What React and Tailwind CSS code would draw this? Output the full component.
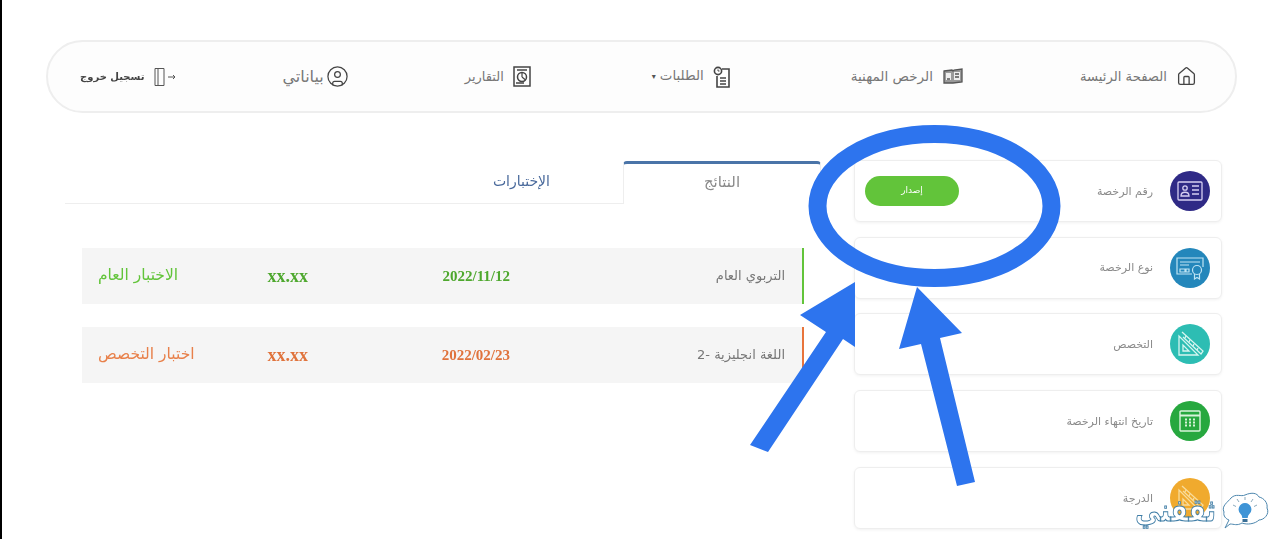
import React from 'react';
import { House, CircleUser } from 'lucide-react';

const ARABIC = "font-['DejaVu_Sans',sans-serif]";

// --- ICONS ---

const LicensesIcon = () => (
  <svg width="22" height="16" viewBox="0 0 22 16" fill="none" stroke="#555" strokeWidth="1.3">
    <path d="M2 3 L10 2 L11 3 L12 2 L20 1 V14 L11 15 L2 15 Z" fill="#9a9a9a" />
    <rect x="4" y="5" width="5" height="7" fill="#eee" stroke="none" />
    <rect x="12" y="4" width="6" height="8" fill="#eee" stroke="none" />
    <path d="M5 11h3M13 6h4M13 9h4" />
  </svg>
);

const RequestsIcon = () => (
  <svg width="18" height="22" viewBox="0 0 18 22" fill="none" stroke="#444" strokeWidth="1.6">
    <circle cx="5" cy="5" r="3.600" />
    <path d="M5 3.400V5h1.500" strokeWidth="1" />
    <path d="M9 3h7v18H4V10" />
    <path d="M7 12h6M7 15h6M7 18h6" strokeWidth="1.3" />
  </svg>
);

const ReportsIcon = () => (
  <svg width="18" height="21" viewBox="0 0 18 21" fill="none" stroke="#444" strokeWidth="1.5">
    <rect x="1" y="1" width="16" height="19" />
    <path d="M4 4h10" />
    <circle cx="9" cy="11" r="4.500" />
    <path d="M9 11V6.500M9 11l3.500 3" strokeWidth="1.2" />
    <path d="M3 17h8" />
  </svg>
);

const LogoutIcon = () => (
  <svg width="22" height="20" viewBox="0 0 22 20" fill="none" stroke="#555" strokeWidth="1">
    <path d="M1 1.500h9v17H1z" />
    <path d="M4 1.500v17" />
    <path d="M14 10h7M19 8l2 2-2 2" />
  </svg>
);

const IdCardIcon = () => (
  <svg width="26" height="20" viewBox="0 0 26 20" fill="none" stroke="#d6cff2" strokeWidth="1.3">
    <rect x="1" y="1" width="24" height="18" rx="1" />
    <circle cx="8" cy="7" r="2.200" />
    <path d="M4 15c0-5 8-5 8 0z" />
    <path d="M15 5h7M15 9h7M15 13h7" />
  </svg>
);

const CertificateIcon = () => (
  <svg width="28" height="24" viewBox="0 0 28 24" fill="none" stroke="#bfe4f4" strokeWidth="1.2">
    <path d="M16 18H1V2h26v9" />
    <path d="M4 6h20M4 9h9M4 13h5v3H4zM10 13h3v3h-3z" />
    <circle cx="21" cy="14" r="4.500" />
    <path d="M18.500 18v5l2.500-1.500 2.500 1.500v-5" />
  </svg>
);

const RulersIcon = ({ stroke = '#d6f5f0' }) => (
  <svg width="28" height="28" viewBox="0 0 28 28" fill="none" stroke={stroke} strokeWidth="1.3">
    <path d="M3 25V6l19 19z" />
    <path d="M7 21v-6l6 6z" />
    <path d="M6 2l21 19-2 3L7 7" />
    <path d="M10 6l-1 2M14 10l-1 2M18 14l-1 2M22 18l-1 2" />
  </svg>
);

const CalendarIcon = () => (
  <svg width="24" height="24" viewBox="0 0 24 24" fill="none" stroke="#d8f3da" strokeWidth="1.4">
    <rect x="2" y="2" width="20" height="20" rx="1" />
    <path d="M2 6.500h20" strokeWidth="2" />
    <path d="M7 10.500h2M11 10.500h2M15 10.500h2M7 13.500h2M11 13.500h2M15 13.500h2M7 16.500h2M11 16.500h2M15 16.500h2" strokeWidth="2" />
  </svg>
);

const BulbBubble = () => (
  <svg width="50" height="40" viewBox="0 0 50 40">
    <path
      d="M4 21C1 15 8 11 11 7c5-5 10-1 14-3 7-3 12-2 14 2 5 1 9 6 8 11 3 6-3 12-8 12-4 4-12 5-17 3-5 3-8 1-12 1L5 37l4-8C6 28 3 25 4 21z"
      fill="#fff"
      stroke="#4c86ad"
      strokeWidth="1"
    />
    <path d="M25 12a6.500 6.500 0 0 1 4 11.500c-1 1-1 2-1.300 3.500h-5.400c-.3-1.500-.3-2.500-1.300-3.500A6.500 6.500 0 0 1 25 12z" fill="#3f94d6" />
    <rect x="22.500" y="28" width="5" height="3" fill="#3a6f96" />
    <path d="M25 6v3M17 8l2 3M33 8l-2 3M13 14l3 1.500M37 14l-3 1.500" stroke="#6f94ab" strokeWidth="0.8" />
  </svg>
);

// --- DATA ---

const navItems = [
  { icon: <House size={21} strokeWidth={1.5} color="#444" />, label: 'الصفحة الرئيسة', size: 'text-[13.2px]' },
  { icon: <LicensesIcon />, label: 'الرخص المهنية', size: 'text-[13.6px]' },
  { icon: <RequestsIcon />, label: 'الطلبات', caret: true, size: 'text-[13.4px]', shift: 'mr-[4px]' },
  { icon: <ReportsIcon />, label: 'التقارير', size: 'text-[13px]', shift: 'mr-[5px]' },
  { icon: <CircleUser size={23} strokeWidth={1.3} color="#444" />, label: 'بياناتي', gap: 'gap-[2px]', size: 'text-[16px]' },
  { icon: <LogoutIcon />, label: 'تسجيل خروج', strong: true, size: 'text-[10px]', shift: 'mr-[-9px]' },
];

const cards = [
  { label: 'رقم الرخصة', color: 'bg-[#2f2a86]', icon: <IdCardIcon />, action: true },
  { label: 'نوع الرخصة', color: 'bg-[#2487bb]', icon: <CertificateIcon /> },
  { label: 'التخصص', color: 'bg-[#2dbdb3]', icon: <RulersIcon /> },
  { label: 'تاريخ انتهاء الرخصة', color: 'bg-[#27a83f]', icon: <CalendarIcon /> },
  { label: 'الدرجة', color: 'bg-[#f0aa2e]', icon: <RulersIcon stroke="#f8dc9c" /> },
];

const results = [
  { name: 'التربوي العام', date: '2022/11/12', score: 'xx.xx', title: 'الاختبار العام', border: 'border-[#62c43a]', text: 'text-[#62c43a]', dark: 'text-[#4ea82e]' },
  { name: 'اللغة انجليزية -2', date: '2022/02/23', score: 'xx.xx', title: 'اختبار التخصص', border: 'border-[#e8743b]', text: 'text-[#e8804a]', dark: 'text-[#e0733c]' },
];

// --- SUB COMPONENTS ---

const NavItem = ({ icon, label, caret, strong, gap, size, shift }) => (
  <div className={`flex items-center ${gap || 'gap-[9px]'} ${shift || ''}`}>
    {icon}
    <span className={`${size} ${strong ? 'font-bold text-[#444]' : 'text-[#777]'}`}>{label}</span>
    {caret && <span className="mr-[-5px] text-[8px] text-[#555]">▾</span>}
  </div>
);

const InfoCard = ({ label, color, icon, action }) => (
  <div className="flex h-[62px] items-center rounded-md border border-[#eeeeee] bg-white pr-[11px] pl-[10px] shadow-[0_1px_3px_rgba(0,0,0,0.06)]">
    <div className={`flex h-[40px] w-[40px] shrink-0 items-center justify-center rounded-full ${color}`}>{icon}</div>
    <span className="mt-[2px] mr-[17px] text-[11px] text-[#8a8a8a]">{label}</span>
    {action && (
      <button className="mr-auto mb-[1px] h-[30px] w-[94px] rounded-full bg-[#62c43a] text-[9px] text-white">إصدار</button>
    )}
  </div>
);

const ResultRow = ({ name, date, score, title, border, text, dark }) => (
  <div className={`grid h-[56px] grid-cols-[292px_202px_90px_1fr] items-center border-r-2 bg-[#f5f5f5] ${border}`}>
    <span className="pr-[17px] text-[13px] text-[#777]">{name}</span>
    <span className={`font-['Liberation_Serif',serif] text-[15px] font-bold ${dark}`}>{date}</span>
    <span className={`font-['Liberation_Serif',serif] text-[18px] font-bold ${dark}`}>{score}</span>
    <span className={`pl-[16px] text-left text-[15.5px] whitespace-nowrap ${text}`}>{title}</span>
  </div>
);

const App = () => {
  return (
    <div dir="rtl" className={`relative h-[539px] w-[1280px] overflow-hidden border-l-2 border-black bg-white ${ARABIC}`}>
      <div className="blur-[0.4px]">
        {/* TOP NAV */}
        <nav className="mt-[40px] mr-[43px] ml-[44px] flex h-[73px] items-center justify-between rounded-[37px] border-2 border-[#eeeeee] bg-[#fdfdfd] pr-[38px] pl-[32px]">
          {navItems.map((item) => (
            <NavItem key={item.label} {...item} />
          ))}
        </nav>

        <main className="mt-[47px] mr-[58px] flex items-start">
          {/* LICENSE CARDS */}
          <aside className="flex w-[368px] shrink-0 flex-col gap-[14.7px]">
            {cards.map((card) => (
              <InfoCard key={card.label} {...card} />
            ))}
          </aside>

          {/* TABS AND RESULTS */}
          <section className="mt-[1px] mr-[33px] w-[756px]">
            <div className="flex h-[43px]">
              <div className="flex w-[198px] items-center justify-center rounded-t-sm border-x border-t-[3px] border-x-[#eeeeee] border-t-[#4a74a8] pb-[3px] text-[15px] text-[#8a8a8a]">
                النتائج
              </div>
              <div className="flex-1 border-b border-[#eeeeee] pt-[10px] pr-[73px] text-[14px] font-medium text-[#4a6a9c]">
                الإختبارات
              </div>
            </div>
            <div className="mt-[44px] mr-[17px] flex w-[722px] flex-col gap-[23px]">
              {results.map((row) => (
                <ResultRow key={row.name} {...row} />
              ))}
            </div>
          </section>
        </main>
      </div>

      {/* HAND DRAWN ANNOTATION */}
      <svg className="absolute top-0 left-[-2px]" width="1280" height="539" viewBox="0 0 1280 539">
        <ellipse cx="934.500" cy="206" rx="117" ry="72" fill="none" stroke="#2d74ee" strokeWidth="18" />
        <polygon points="855,282 800,315 826,332 750,445 768,452 843,339 855,347" fill="#2d74ee" />
        <polygon points="917,287 899,349 921,344 957,486 975,482 940,338 962,333" fill="#2d74ee" />
      </svg>

      {/* WATERMARK */}
      <div dir="ltr" className="absolute top-[491px] right-[10px] flex items-center gap-[4px]">
        <span className="scale-y-125 text-[25px] leading-[40px] font-bold text-white [-webkit-text-stroke:0.8px_#3f7da6]">ثقفني</span>
        <BulbBubble />
      </div>
    </div>
  );
};

export default App;
